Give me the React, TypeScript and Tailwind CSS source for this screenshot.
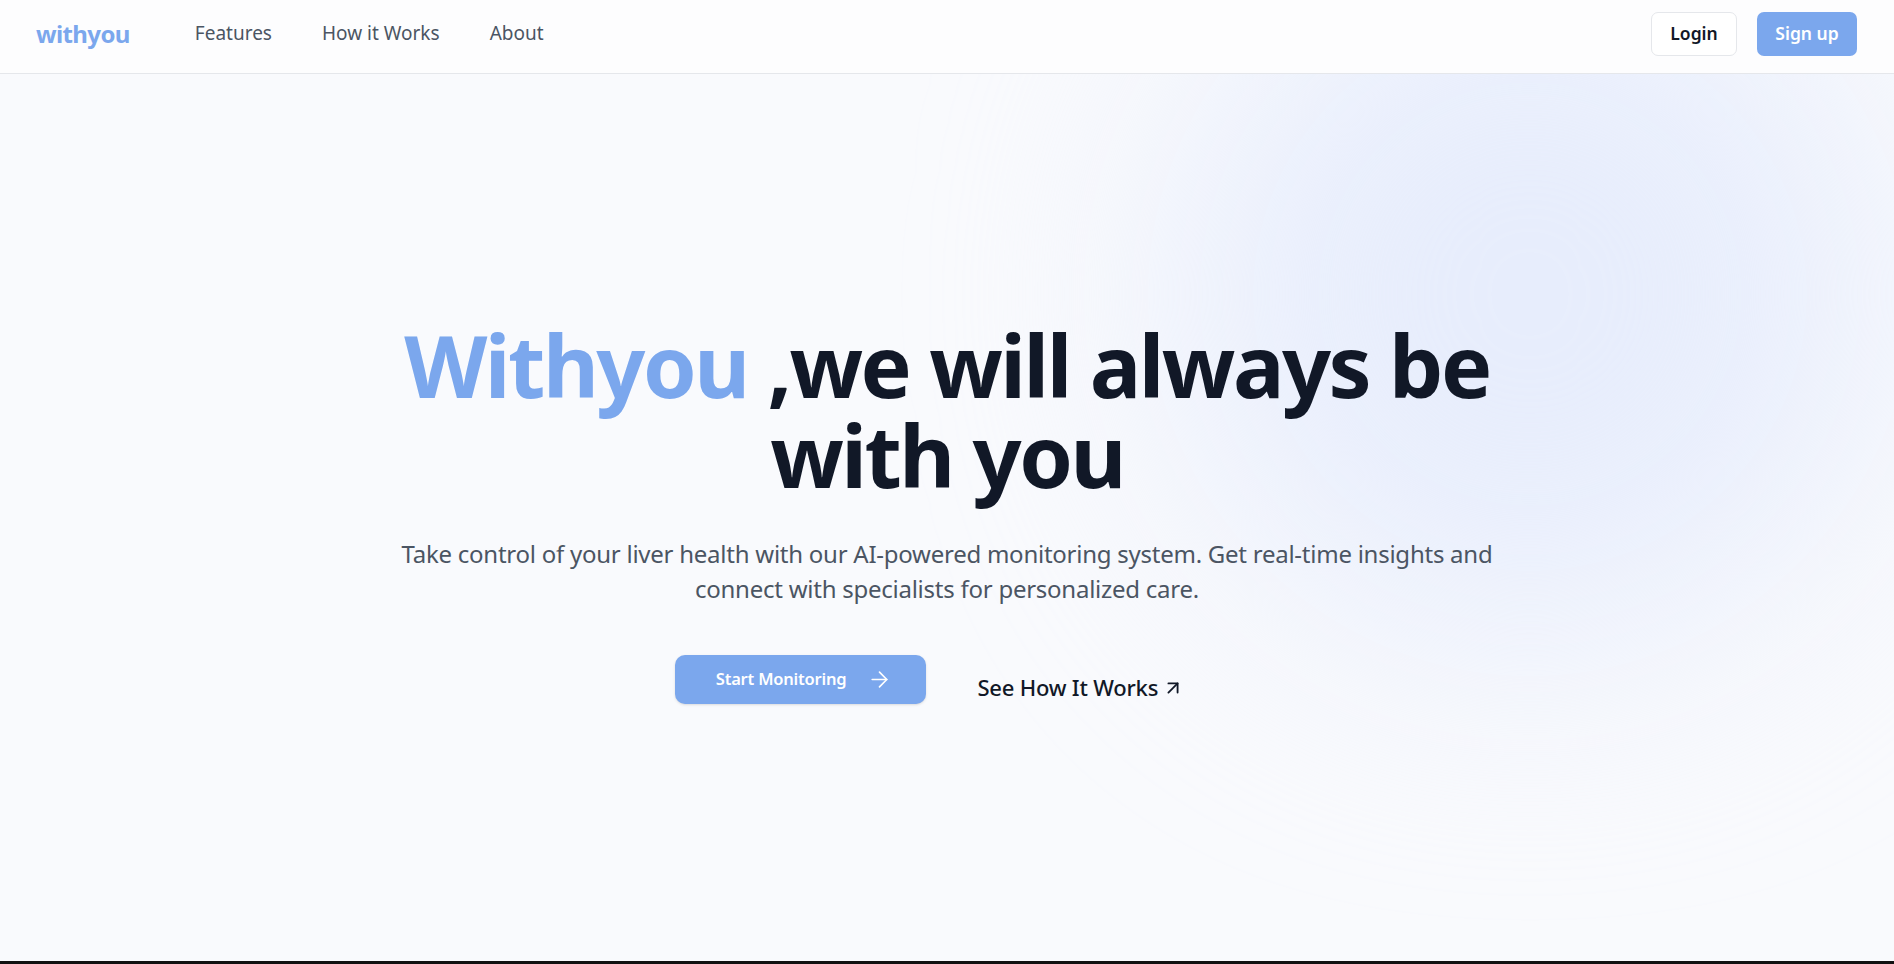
import { ArrowRight, ArrowUpRight } from "lucide-react";

const Navbar = () => {
  return (
    <nav className="h-[74px] bg-[#fdfdfe] border-b border-[#e5e7eb] flex items-center justify-between pl-[36px] pr-[37px] pb-[6px]">
      {/* Left: logo + links */}
      <div className="flex items-center">
        <a href="#" className="text-[24px] font-bold text-[#7ba7ed] tracking-[-0.6px]">
          withyou
        </a>
        <div className="flex items-center gap-[50px] ml-[65px] text-[19px] text-[#4b5563]">
          <a href="#features">Features</a>
          <a href="#how">How it Works</a>
          <a href="#about">About</a>
        </div>
      </div>

      {/* Right: auth buttons */}
      <div className="flex items-center gap-[20px]">
        <button className="h-[44px] w-[86px] rounded-[7px] border border-[#e5e7eb] bg-white text-[17.5px] font-semibold text-[#111827]">
          Login
        </button>
        <button className="h-[44px] w-[100px] rounded-[7px] bg-[#7ba7ed] text-[17.5px] font-semibold text-white">
          Sign up
        </button>
      </div>
    </nav>
  );
};

const Hero = () => {
  return (
    <section className="relative h-[887px] overflow-hidden bg-[#f9fafd]">
      {/* soft blue glow, top right */}
      <div className="absolute left-[1180px] top-[-130px] w-[700px] h-[700px] rounded-full bg-[#e7edfc] blur-[120px]" />

      <div className="relative flex flex-col items-center pt-[246px]">
        <h1 className="text-center text-[86px] leading-[90px] font-bold text-[#111827] tracking-[-2.5px]">
          <span className="text-[#7ba7ed]">Withyou</span> ,we will always be
          <br />
          with you
        </h1>

        <p className="mt-[36px] text-center text-[24px] leading-[35px] text-[#4b5563] tracking-[-0.25px]">
          Take control of your liver health with our AI-powered monitoring system. Get real-time insights and
          <br />
          connect with specialists for personalized care.
        </p>

        <div className="mt-[49px] flex items-start gap-[51px]">
          <button className="h-[49px] flex items-center pl-[41px] pr-[34px] rounded-[10px] bg-[#7ba7ed] text-white text-[16.5px] font-semibold shadow-sm tracking-[-0.2px]">
            Start Monitoring
            <ArrowRight className="ml-[21px]" size={25} strokeWidth={1.6} />
          </button>
          <a href="#how" className="mt-[16px] pr-[35px] flex items-center text-[22px] font-medium text-[#111827] tracking-[-0.2px]">
            See How It Works
            <ArrowUpRight className="ml-[4px]" size={22} strokeWidth={2} />
          </a>
        </div>
      </div>
    </section>
  );
};

export default function App() {
  return (
    <div className="font-['Noto_Sans',sans-serif] w-full">
      <Navbar />
      <Hero />
      <div className="h-[200px] bg-[#111111]" />
    </div>
  );
}
